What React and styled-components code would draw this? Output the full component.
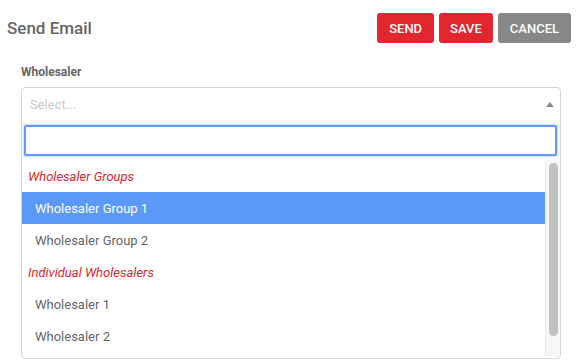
import styled, { createGlobalStyle } from 'styled-components'

const GlobalStyle = createGlobalStyle`
	html, body {
		margin: 0;
		padding: 0;
		background: #fff;
		font-family: Roboto, 'Liberation Sans', Arial, sans-serif;
	}
`

const Page = styled.div`
	width: 588px;
	height: 361px;
	overflow: hidden;
	background: #fff;
`

const Header = styled.div`
	display: flex;
	align-items: center;
	justify-content: space-between;
	padding: 13px 17px 0 7px;
`

const Title = styled.h1`
	margin: 0;
	font-size: 17px;
	font-weight: 500;
	color: #666;
`

const Actions = styled.div`
	display: flex;
	gap: 5px;
`

const Button = styled.button`
	height: 30px;
	padding: 0 ${(p) => (p.$narrow ? 11 : 12)}px;
	border: none;
	border-radius: 3px;
	font-family: inherit;
	font-size: 13px;
	font-weight: 500;
	color: #fff;
	background: ${(p) => (p.$gray ? '#888888' : '#e1262d')};
	cursor: pointer;
`

const Field = styled.div`
	padding: 22px 27px 0 21px;
`

const Label = styled.label`
	display: block;
	font-size: 12px;
	font-weight: 700;
	color: #666;
	line-height: 14px;
	margin-bottom: 8px;
`

const SelectBox = styled.div`
	border: 1px solid #d4d4d4;
	border-radius: 4px;
	height: 270px;
	display: flex;
	flex-direction: column;
	overflow: hidden;
`

const Control = styled.div`
	display: flex;
	align-items: center;
	justify-content: space-between;
	height: 33px;
	flex-shrink: 0;
	padding: 0 6px 0 8px;
	font-size: 13px;
	color: #c8c8c8;
`

const Arrow = styled.span`
	width: 0;
	height: 0;
	border-left: 4px solid transparent;
	border-right: 4px solid transparent;
	border-bottom: 5px solid #888;
`

const SearchWrap = styled.div`
	padding: 4px 3px 4px 2px;
	flex-shrink: 0;
`

const Search = styled.input`
	display: block;
	box-sizing: border-box;
	width: 100%;
	height: 31px;
	border: 2px solid #5d9cf6;
	border-radius: 2px;
	box-shadow: 0 0 2px 1px rgba(93, 156, 246, 0.35);
	outline: none;
	font-family: inherit;
	font-size: 13px;
`

const ListArea = styled.div`
	display: flex;
	height: 197px;
`

const List = styled.ul`
	flex: 1;
	list-style: none;
	margin: 0;
	padding: 0;
	overflow: hidden;
`

const ScrollTrack = styled.div`
	width: 15px;
	box-sizing: border-box;
	padding: 3px 2px 0 3px;
	background: #f7f7f7;
	border-left: 1px solid #e8e8e8;
`

const ScrollThumb = styled.div`
	height: 173px;
	border-radius: 5px;
	background: #c1c1c1;
`

const GroupLabel = styled.li`
	height: 32px;
	display: flex;
	align-items: center;
	padding-left: 6px;
	font-size: 13px;
	font-style: italic;
	color: #e1262d;
`

const Option = styled.li`
	height: 32px;
	display: flex;
	align-items: center;
	padding-left: 13px;
	font-size: 13px;
	color: ${(p) => (p.$active ? '#fff' : '#666')};
	background: ${(p) => (p.$active ? '#5a99f8' : 'transparent')};
`

const groups = [
	{
		label: 'Wholesaler Groups',
		options: ['Wholesaler Group 1', 'Wholesaler Group 2'],
	},
	{
		label: 'Individual Wholesalers',
		options: ['Wholesaler 1', 'Wholesaler 2'],
	},
]

const App = () => {
	const active = 'Wholesaler Group 1'

	return (
		<Page>
			<GlobalStyle />
			<Header>
				<Title>Send Email</Title>
				<Actions>
					<Button>SEND</Button>
					<Button $narrow>SAVE</Button>
					<Button $gray>CANCEL</Button>
				</Actions>
			</Header>
			<Field>
				<Label>Wholesaler</Label>
				<SelectBox>
					<Control>
						<span>Select...</span>
						<Arrow />
					</Control>
					<SearchWrap>
						<Search type="text" />
					</SearchWrap>
					<ListArea>
						<List>
							{groups.map((g) => [
								<GroupLabel key={g.label}>{g.label}</GroupLabel>,
								...g.options.map((o) => (
									<Option key={o} $active={o === active}>
										{o}
									</Option>
								)),
							])}
						</List>
						<ScrollTrack>
							<ScrollThumb />
						</ScrollTrack>
					</ListArea>
				</SelectBox>
			</Field>
		</Page>
	)
}

export default App
